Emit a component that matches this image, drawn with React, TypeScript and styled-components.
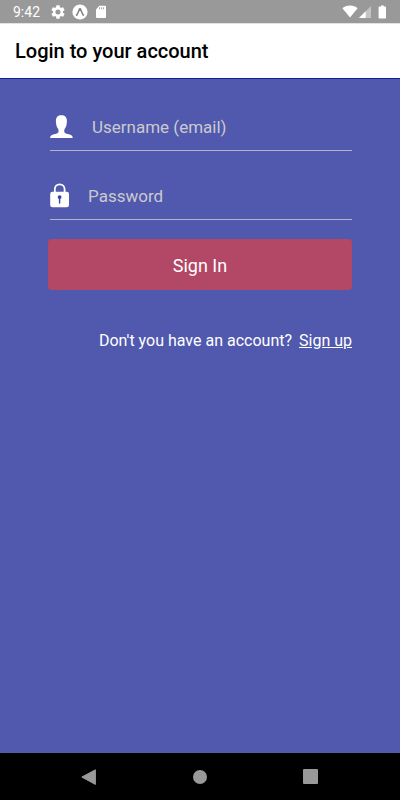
import React from 'react';
import styled, { createGlobalStyle } from 'styled-components';

const GlobalStyle = createGlobalStyle`
  * { box-sizing: border-box; }
  body { margin: 0; font-family: Roboto, sans-serif; }
`;

const Screen = styled.div`
  display: flex;
  flex-direction: column;
  min-height: 100vh;
  background: #5059ae;
  color: #ffffff;
`;

const StatusBar = styled.div`
  display: flex;
  align-items: center;
  height: 23px;
  padding: 0 13px;
  background: #999999;
`;

const Clock = styled.time`
  width: 38px;
  font-size: 14px;
  line-height: 24px;
  white-space: nowrap;
`;

const StatusIcons = styled.div<{ $end?: boolean }>`
  display: flex;
  align-items: center;
  gap: ${(p) => (p.$end ? 1 : 7)}px;
  margin-left: ${(p) => (p.$end ? 'auto' : '0')};

  svg { display: block; }
`;

const Header = styled.header`
  display: flex;
  align-items: center;
  height: 56px;
  padding: 0 15px;
  background: #ffffff;
  border-top: 1px solid #e2e2e2;
  border-bottom: 1px solid #10209a;
`;

const Title = styled.h1`
  margin: 0;
  color: #000000;
  font-size: 20px;
  font-weight: 500;
  line-height: 24px;
`;

const Form = styled.form`
  flex: 1;
  display: flex;
  flex-direction: column;
  padding: 24px 48px;
`;

const Field = styled.label<{ $gap: number }>`
  display: flex;
  align-items: center;
  gap: ${(p) => p.$gap}px;
  height: 48px;
  margin: 0 0 21px 2px;
  border-bottom: 1px solid #b3b4cb;

  svg { display: block; flex: none; }
`;

const Input = styled.input`
  flex: 1;
  min-width: 0;
  padding: 0;
  border: 0;
  outline: 0;
  background: transparent;
  color: #ffffff;
  font: 17px/24px Roboto, sans-serif;

  &::placeholder { color: #cbcbcf; opacity: 1; }
`;

const SubmitButton = styled.button`
  height: 51px;
  margin: -2px 0 39px;
  padding: 2px 0 0;
  border: 0;
  border-radius: 4px;
  background: #b24766;
  color: #ffffff;
  font: 18px/24px Roboto, sans-serif;
  cursor: pointer;
`;

const SignupPrompt = styled.p`
  display: flex;
  justify-content: flex-end;
  gap: 7px;
  margin: 0;
  font-size: 16px;
  line-height: 24px;
  white-space: nowrap;
`;

const SignupLink = styled.a`
  color: inherit;
  text-decoration: underline;
`;

const NavBar = styled.nav`
  display: grid;
  grid-template-columns: repeat(3, 1fr);
  height: 47px;
  padding: 0 34px;
  background: #000000;
`;

const NavButton = styled.button`
  display: flex;
  align-items: center;
  justify-content: center;
  padding: 0;
  border: 0;
  background: none;
  cursor: pointer;
`;

const GearIcon = () => (
  <svg width="14" height="14" viewBox="2 2 20 20" fill="#fff" aria-hidden="true">
    <path d="M19.14 12.94c.04-.3.06-.61.06-.94s-.02-.64-.07-.94l2.03-1.58a.49.49 0 0 0 .12-.61l-1.92-3.32a.49.49 0 0 0-.59-.22l-2.39.96a7 7 0 0 0-1.62-.94l-.36-2.54a.48.48 0 0 0-.48-.41h-3.84a.48.48 0 0 0-.47.41l-.36 2.54a7.4 7.4 0 0 0-1.62.94l-2.39-.96a.48.48 0 0 0-.59.22L2.74 8.87a.47.47 0 0 0 .12.61l2.03 1.58a6 6 0 0 0-.02 1.88l-2.03 1.58a.49.49 0 0 0-.12.61l1.92 3.32c.12.22.37.29.59.22l2.39-.96c.5.38 1.03.7 1.62.94l.36 2.54c.05.24.24.41.48.41h3.84c.24 0 .44-.17.47-.41l.36-2.54a7 7 0 0 0 1.62-.94l2.39.96c.22.08.47 0 .59-.22l1.92-3.32a.47.47 0 0 0-.12-.61zM12 15.6a3.6 3.6 0 1 1 0-7.2 3.6 3.6 0 0 1 0 7.2z" />
  </svg>
);

const ExpoIcon = () => (
  <svg width="16" height="16" viewBox="0 0 16 16" aria-hidden="true">
    <circle cx="8" cy="8" r="7.6" fill="#fff" />
    <path d="M4.6 11.2C5.9 9.3 6.8 6.9 7.6 4.9h.8c.8 2 1.7 4.4 3 6.3" fill="none" stroke="#858585" strokeWidth="1.6" strokeLinecap="round" strokeLinejoin="round" />
  </svg>
);

const SdCardIcon = () => (
  <svg width="12" height="14" viewBox="0 0 12 14" aria-hidden="true">
    <path d="M4.4.8H10a1 1 0 0 1 1 1V12a1 1 0 0 1-1 1H2a1 1 0 0 1-1-1V4.4z" fill="#fff" />
    <path d="M4.6 2.3v2M6.6 2.3v2M8.6 2.3v2" stroke="#999" strokeWidth=".9" />
  </svg>
);

const WifiIcon = () => (
  <svg width="16" height="13" viewBox="0 0 16 13" aria-hidden="true">
    <path d="M8 12.6.4 3.2C2.4 1.4 5 .4 8 .4s5.6 1 7.6 2.8z" fill="#fff" />
  </svg>
);

const SignalIcon = () => (
  <svg width="12" height="12" viewBox="0 0 12 12" aria-hidden="true">
    <path d="M12 0v12H0z" fill="#c4c4c4" />
    <path d="M6.7 5.3V12H0z" fill="#fff" />
  </svg>
);

const BatteryIcon = () => (
  <svg width="15" height="14" viewBox="0 0 15 14" aria-hidden="true">
    <path d="M9 1.5V.4h2.8v1.1h1.4q.8 0 .8.8v10.5q0 .8-.8.8H7.4q-.8 0-.8-.8V2.3q0-.8.8-.8z" fill="#fff" />
  </svg>
);

const PersonIcon = () => (
  <svg width="23" height="24" viewBox="0 0 23 24" aria-hidden="true">
    <path d="M11.4.2c3.6 0 5.5 2 5.5 5.5 0 1.4-.1 2.6-.3 3.6-.3 2-1.1 3.5-2 4.7-.4.6-.4 2.4-.2 3.2.3.9 1.7 1.4 3.3 1.8 3 .6 5 1.4 5 4H.1c0-2.6 2-3.4 5-4 1.6-.4 3-.9 3.3-1.8.2-.8.2-2.6-.2-3.2-.9-1.2-1.7-2.7-2-4.7-.2-1-.3-2.2-.3-3.6C5.9 2.2 7.8.2 11.4.2z" fill="#fff" />
  </svg>
);

const LockIcon = () => (
  <svg width="20" height="25" viewBox="0 0 20 25" aria-hidden="true">
    <path d="M4.8 10V6.2a4.9 4.9 0 0 1 9.8 0V10" fill="none" stroke="#fff" strokeWidth="1.8" />
    <rect x=".2" y="8.7" width="18.8" height="15.6" rx="2.2" fill="#fff" />
    <circle cx="9.6" cy="14.1" r="1.9" fill="#3744a0" />
    <path d="M9.6 14v6" stroke="#3744a0" strokeWidth="1.4" strokeLinecap="round" />
  </svg>
);

export default function App() {
  return (
    <Screen>
      <GlobalStyle />
      <StatusBar>
        <Clock>9:42</Clock>
        <StatusIcons>
          <GearIcon />
          <ExpoIcon />
          <SdCardIcon />
        </StatusIcons>
        <StatusIcons $end>
          <WifiIcon />
          <SignalIcon />
          <BatteryIcon />
        </StatusIcons>
      </StatusBar>
      <Header>
        <Title>Login to your account</Title>
      </Header>
      <Form onSubmit={(e) => e.preventDefault()}>
        <Field $gap={19}>
          <PersonIcon />
          <Input type="email" aria-label="Username (email)" placeholder="Username (email)" />
        </Field>
        <Field $gap={18}>
          <LockIcon />
          <Input type="password" aria-label="Password" placeholder="Password" />
        </Field>
        <SubmitButton type="submit">Sign In</SubmitButton>
        <SignupPrompt>
          <span>Don't you have an account?</span>
          <SignupLink href="#signup">Sign up</SignupLink>
        </SignupPrompt>
      </Form>
      <NavBar aria-label="System">
        <NavButton type="button" aria-label="Back">
          <svg width="16" height="16" viewBox="0 0 16 16" aria-hidden="true">
            <path d="M14.4.8v14.6L.8 8.1z" fill="#999" stroke="#999" strokeLinejoin="round" />
          </svg>
        </NavButton>
        <NavButton type="button" aria-label="Home">
          <svg width="14" height="14" viewBox="0 0 14 14" aria-hidden="true">
            <circle cx="7" cy="7" r="7" fill="#999" />
          </svg>
        </NavButton>
        <NavButton type="button" aria-label="Recent apps">
          <svg width="15" height="15" viewBox="0 0 15 15" aria-hidden="true">
            <rect width="15" height="15" rx="1" fill="#999" />
          </svg>
        </NavButton>
      </NavBar>
    </Screen>
  );
}
